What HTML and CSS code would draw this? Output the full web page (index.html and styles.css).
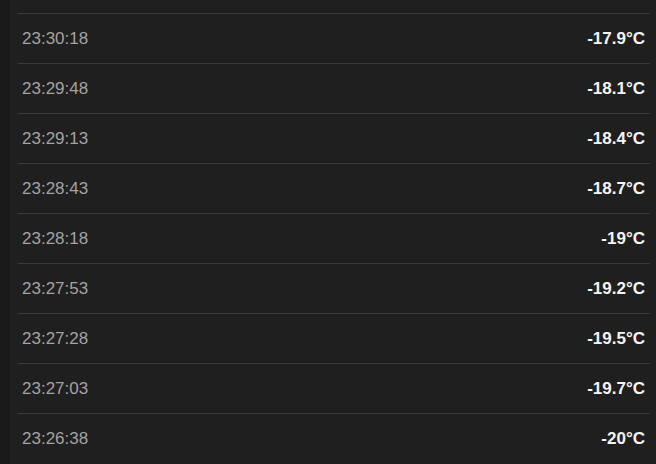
FILE: index.html
```html
<!DOCTYPE html>
<html>
<head>
  <title>Temperature Log</title>
  <link rel="stylesheet" href="styles.css">
</head>
<body>
  <div class="layout">
    <div class="side-strip"></div>
    <div class="log-panel">
      <div class="log-row"><span class="log-time">23:30:18</span><span class="log-value">-17.9°C</span></div>
      <div class="log-row"><span class="log-time">23:29:48</span><span class="log-value">-18.1°C</span></div>
      <div class="log-row"><span class="log-time">23:29:13</span><span class="log-value">-18.4°C</span></div>
      <div class="log-row"><span class="log-time">23:28:43</span><span class="log-value">-18.7°C</span></div>
      <div class="log-row"><span class="log-time">23:28:18</span><span class="log-value">-19°C</span></div>
      <div class="log-row"><span class="log-time">23:27:53</span><span class="log-value">-19.2°C</span></div>
      <div class="log-row"><span class="log-time">23:27:28</span><span class="log-value">-19.5°C</span></div>
      <div class="log-row"><span class="log-time">23:27:03</span><span class="log-value">-19.7°C</span></div>
      <div class="log-row"><span class="log-time">23:26:38</span><span class="log-value">-20°C</span></div>
    </div>
  </div>
</body>
</html>
```

FILE: styles.css
```css
html, body {
  margin: 0;
  height: 100%;
  background: #1f1f1f;
  overflow: hidden;
}

body {
  font-family: 'Liberation Sans', Arial, sans-serif;
  color: #fff;
}

.layout {
  display: flex;
  height: 100%;
}

.side-strip {
  width: 10px;
  background: #1a1a1a;
  flex-shrink: 0;
}

.log-panel {
  flex: 1;
  padding: 13px 6px 0 8px;
}

.log-row {
  display: flex;
  justify-content: space-between;
  align-items: center;
  height: 49px;
  border-top: 1px solid #3a3a3a;
  padding: 0 5px 0 4px;
}

.log-time {
  color: #a3a3a3;
  font-size: 17px;
}

.log-value {
  font-size: 17px;
  font-weight: bold;
  color: #f5f5f5;
}
```
